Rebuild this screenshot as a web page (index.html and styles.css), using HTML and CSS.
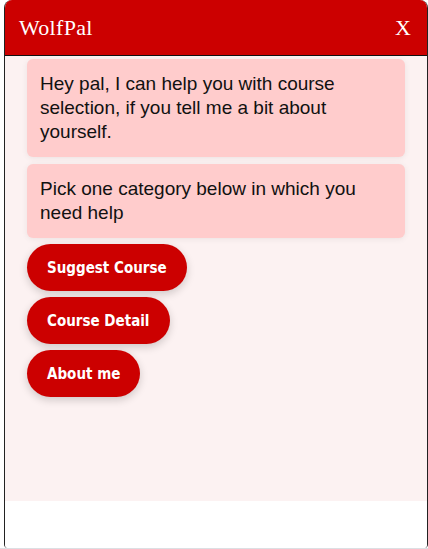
FILE: index.html
```html
<!DOCTYPE html>
<html>
<head>
<meta charset="utf-8">
<link rel="stylesheet" href="styles.css">
</head>
<body>
<div class="chat">
  <div class="chat-header">
    <span class="title">WolfPal</span>
    <span class="close">X</span>
  </div>
  <div class="chat-body">
    <div class="bubble">Hey pal, I can help you with course selection, if you tell me a bit about yourself.</div>
    <div class="bubble">Pick one category below in which you need help</div>
    <button class="option">Suggest Course</button>
    <button class="option">Course Detail</button>
    <button class="option">About me</button>
  </div>
  <div class="chat-footer"></div>
</div>
</body>
</html>
```
FILE: styles.css
```css
html, body {
  margin: 0;
  padding: 0;
  background: #ffffff;
}
body {
  height: 548px;
  border-bottom: 1px solid #dcdfe3;
  overflow: hidden;
}
.chat {
  margin-left: 4px;
  width: 424px;
  height: 548px;
  box-sizing: border-box;
  border: 1px solid #222;
  border-top: none;
  border-bottom: none;
  border-radius: 8px 8px 4px 4px;
  overflow: hidden;
  display: flex;
  flex-direction: column;
  background: #fff;
}
.chat-header {
  height: 55px;
  background: #cc0000;
  border-bottom: 1px solid #111;
  display: flex;
  align-items: center;
  justify-content: space-between;
  padding: 0 16px 0 14px;
  color: #ffffff;
  font-family: "Liberation Serif", serif;
  font-size: 22px;
  flex-shrink: 0;
}
.title {
  letter-spacing: 0.3px;
  padding-top: 1px;
}
.close {
  padding-top: 1px;
}
.chat-body {
  height: 445px;
  background: #fcf2f2;
  padding: 3px 22px 0 22px;
  display: flex;
  flex-direction: column;
  align-items: flex-start;
  flex-shrink: 0;
  box-sizing: border-box;
}
.bubble {
  align-self: stretch;
  background: #ffcccc;
  border-radius: 6px;
  padding: 13px 40px 13px 13px;
  font-family: "Liberation Sans", Arial, sans-serif;
  font-size: 19px;
  line-height: 24px;
  color: #111;
  box-shadow: 0 1px 6px rgba(0, 0, 0, 0.07);
  margin-bottom: 7px;
}
.bubble + .option {
  margin-top: -1px;
}
.option {
  background: #cc0000;
  color: #ffffff;
  border: none;
  border-radius: 24px;
  height: 47px;
  padding: 0 20px;
  font-family: "DejaVu Sans Condensed", "DejaVu Sans", sans-serif;
  font-weight: bold;
  font-size: 15px;
  box-shadow: 0 3px 8px rgba(0, 0, 0, 0.18);
  margin-bottom: 6px;
  cursor: pointer;
}
.chat-footer {
  flex: 1;
  background: #ffffff;
}
```
